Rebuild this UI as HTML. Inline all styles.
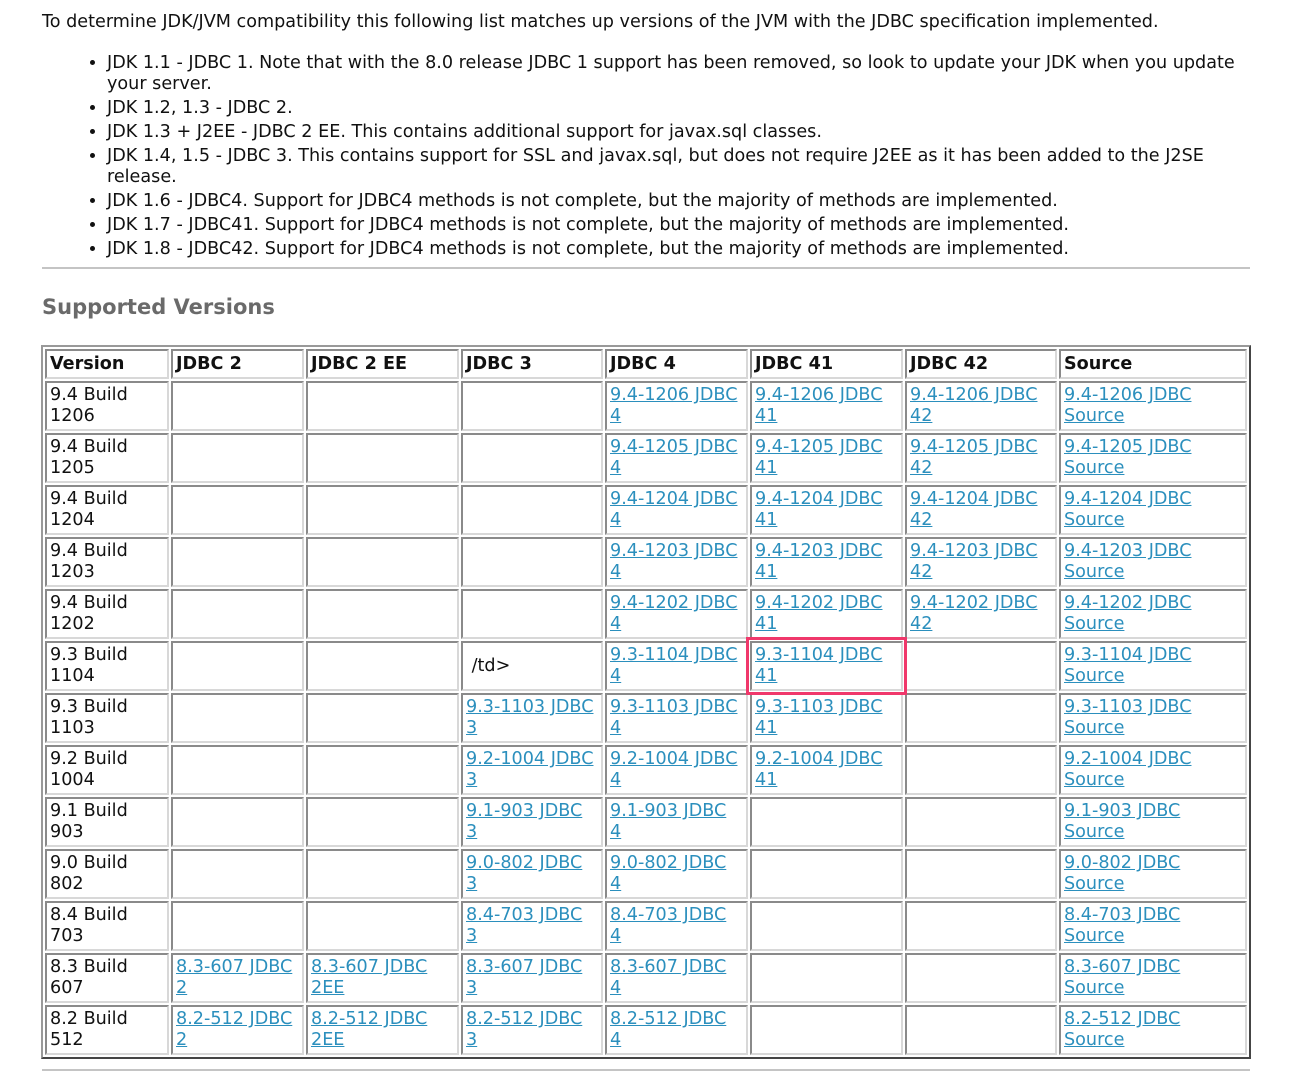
<!DOCTYPE html>
<html><head><meta charset="utf-8"><style>
body{margin:0;background:#fff;font-family:"DejaVu Sans",Verdana,sans-serif;font-size:17.6px;color:#111;}
.wrap{position:relative;width:1300px;height:1087px;overflow:hidden}
p.intro{position:absolute;left:42px;top:12px;margin:0;line-height:21px;white-space:nowrap}
ul{position:absolute;left:42px;top:53px;margin:0;padding-left:65px;width:1180px;line-height:21px;white-space:nowrap}
li{margin-bottom:3px}
hr{position:absolute;left:42px;width:1208px;margin:0;border:0;border-top:2px solid #c4c4c4;height:0}
h2{position:absolute;left:42px;top:295px;margin:0;font-size:21px;color:#6a6a6a;font-weight:bold}
table{position:absolute;left:41px;top:345px;table-layout:fixed;width:1210px;border-collapse:separate;border-spacing:2px;border:2px outset #999;}
td,th{box-sizing:border-box;border:2px solid;border-color:#8a8a8a #d8d8d8 #d8d8d8 #8a8a8a;padding:2px 3px;vertical-align:top;text-align:left;line-height:21px;overflow:hidden;white-space:nowrap}
th{font-weight:bold;height:30px;padding-top:3px}
td{height:50px}
a{color:#2b8fbd;text-decoration:underline}
.hl{outline:3px solid #f0386b;outline-offset:1px}
td.mid{vertical-align:middle}
</style></head><body><div class="wrap">
<p class="intro">To determine JDK/JVM compatibility this following list matches up versions of the JVM with the JDBC specification implemented.</p>
<ul>
<li>JDK 1.1 - JDBC 1. Note that with the 8.0 release JDBC 1 support has been removed, so look to update your JDK when you update<br>your server.</li>
<li>JDK 1.2, 1.3 - JDBC 2.</li>
<li>JDK 1.3 + J2EE - JDBC 2 EE. This contains additional support for javax.sql classes.</li>
<li>JDK 1.4, 1.5 - JDBC 3. This contains support for SSL and javax.sql, but does not require J2EE as it has been added to the J2SE<br>release.</li>
<li>JDK 1.6 - JDBC4. Support for JDBC4 methods is not complete, but the majority of methods are implemented.</li>
<li>JDK 1.7 - JDBC41. Support for JDBC4 methods is not complete, but the majority of methods are implemented.</li>
<li>JDK 1.8 - JDBC42. Support for JDBC4 methods is not complete, but the majority of methods are implemented.</li>
</ul>
<hr style="top:267px">
<h2>Supported Versions</h2>
<table>
<colgroup><col style="width:124px"><col style="width:133px"><col style="width:153px"><col style="width:142px"><col style="width:143px"><col style="width:153px"><col style="width:152px"><col style="width:188px"></colgroup>
<tr><th>Version</th><th>JDBC 2</th><th>JDBC 2 EE</th><th>JDBC 3</th><th>JDBC 4</th><th>JDBC 41</th><th>JDBC 42</th><th>Source</th></tr>
<tr><td>9.4 Build<br>1206</td><td></td><td></td><td></td><td><a>9.4-1206 JDBC<br>4</a></td><td><a>9.4-1206 JDBC<br>41</a></td><td><a>9.4-1206 JDBC<br>42</a></td><td><a>9.4-1206 JDBC<br>Source</a></td></tr>
<tr><td>9.4 Build<br>1205</td><td></td><td></td><td></td><td><a>9.4-1205 JDBC<br>4</a></td><td><a>9.4-1205 JDBC<br>41</a></td><td><a>9.4-1205 JDBC<br>42</a></td><td><a>9.4-1205 JDBC<br>Source</a></td></tr>
<tr><td>9.4 Build<br>1204</td><td></td><td></td><td></td><td><a>9.4-1204 JDBC<br>4</a></td><td><a>9.4-1204 JDBC<br>41</a></td><td><a>9.4-1204 JDBC<br>42</a></td><td><a>9.4-1204 JDBC<br>Source</a></td></tr>
<tr><td>9.4 Build<br>1203</td><td></td><td></td><td></td><td><a>9.4-1203 JDBC<br>4</a></td><td><a>9.4-1203 JDBC<br>41</a></td><td><a>9.4-1203 JDBC<br>42</a></td><td><a>9.4-1203 JDBC<br>Source</a></td></tr>
<tr><td>9.4 Build<br>1202</td><td></td><td></td><td></td><td><a>9.4-1202 JDBC<br>4</a></td><td><a>9.4-1202 JDBC<br>41</a></td><td><a>9.4-1202 JDBC<br>42</a></td><td><a>9.4-1202 JDBC<br>Source</a></td></tr>
<tr><td>9.3 Build<br>1104</td><td></td><td></td><td class="mid">&nbsp;/td&gt;</td><td><a>9.3-1104 JDBC<br>4</a></td><td class="hl"><a>9.3-1104 JDBC<br>41</a></td><td></td><td><a>9.3-1104 JDBC<br>Source</a></td></tr>
<tr><td>9.3 Build<br>1103</td><td></td><td></td><td><a>9.3-1103 JDBC<br>3</a></td><td><a>9.3-1103 JDBC<br>4</a></td><td><a>9.3-1103 JDBC<br>41</a></td><td></td><td><a>9.3-1103 JDBC<br>Source</a></td></tr>
<tr><td>9.2 Build<br>1004</td><td></td><td></td><td><a>9.2-1004 JDBC<br>3</a></td><td><a>9.2-1004 JDBC<br>4</a></td><td><a>9.2-1004 JDBC<br>41</a></td><td></td><td><a>9.2-1004 JDBC<br>Source</a></td></tr>
<tr><td>9.1 Build<br>903</td><td></td><td></td><td><a>9.1-903 JDBC<br>3</a></td><td><a>9.1-903 JDBC<br>4</a></td><td></td><td></td><td><a>9.1-903 JDBC<br>Source</a></td></tr>
<tr><td>9.0 Build<br>802</td><td></td><td></td><td><a>9.0-802 JDBC<br>3</a></td><td><a>9.0-802 JDBC<br>4</a></td><td></td><td></td><td><a>9.0-802 JDBC<br>Source</a></td></tr>
<tr><td>8.4 Build<br>703</td><td></td><td></td><td><a>8.4-703 JDBC<br>3</a></td><td><a>8.4-703 JDBC<br>4</a></td><td></td><td></td><td><a>8.4-703 JDBC<br>Source</a></td></tr>
<tr><td>8.3 Build<br>607</td><td><a>8.3-607 JDBC<br>2</a></td><td><a>8.3-607 JDBC<br>2EE</a></td><td><a>8.3-607 JDBC<br>3</a></td><td><a>8.3-607 JDBC<br>4</a></td><td></td><td></td><td><a>8.3-607 JDBC<br>Source</a></td></tr>
<tr><td>8.2 Build<br>512</td><td><a>8.2-512 JDBC<br>2</a></td><td><a>8.2-512 JDBC<br>2EE</a></td><td><a>8.2-512 JDBC<br>3</a></td><td><a>8.2-512 JDBC<br>4</a></td><td></td><td></td><td><a>8.2-512 JDBC<br>Source</a></td></tr>
</table>
<hr style="top:1069px">
</div></body></html>
